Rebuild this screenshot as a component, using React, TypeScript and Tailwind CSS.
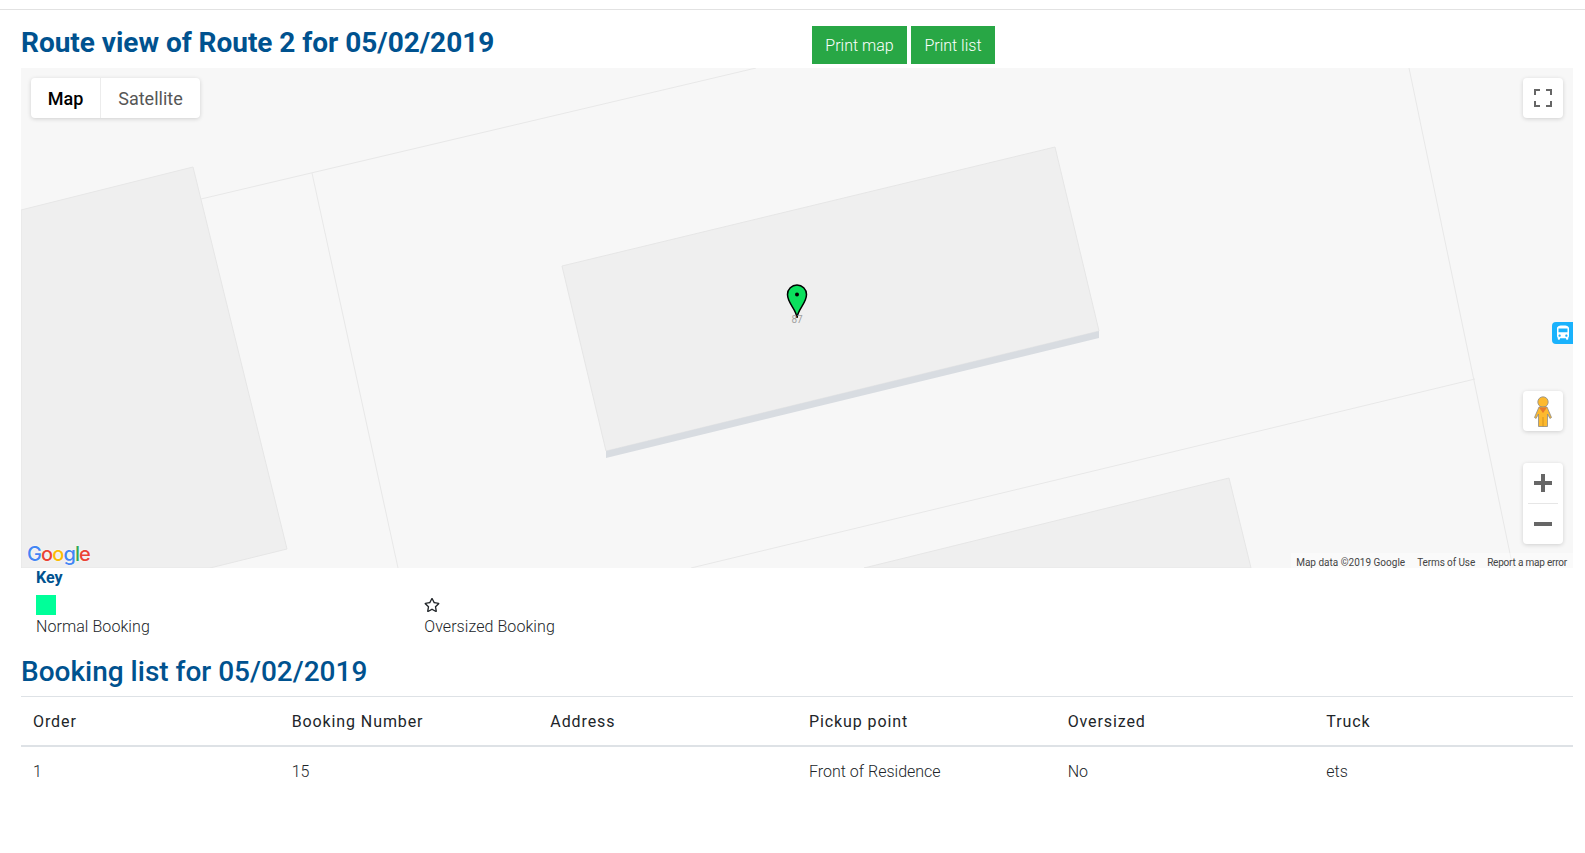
import { FaRegStar } from 'react-icons/fa';

const ROBOTO = 'font-[Roboto,sans-serif]';

function MapCanvas() {
  return (
    <svg className="absolute inset-0" width="1552" height="500" viewBox="0 0 1552 500" fill="none">
      <g stroke="#e8e8e8" strokeWidth="1">
        <path d="M180 131 L735 0" />
        <path d="M291 105 L377 500" />
        <path d="M1388 0 L1492 500" />
        <path d="M1454 311 L670 500" />
      </g>
      <g fill="#efefef" stroke="#e6e6e6" strokeWidth="1">
        <polygon points="0,142 172,99 266,481 189,500 0,500" />
        <polygon points="843,500 1208,410 1230,500" />
        <polygon points="541,198 1034,79 1078,263 585,383" />
      </g>
      <polygon points="585,383 1078,263 1078,270 585,390" fill="#d8dce1" />
    </svg>
  );
}

function Pin() {
  return (
    <div className="absolute left-[756px] top-[216px] w-[40px] h-[45px]">
      <svg width="40" height="36" viewBox="0 0 40 36" className="absolute top-0 left-0">
        <path
          d="M20 34 C19.4 25 10.5 19.5 10.5 10.5 A9.5 9.5 0 0 1 29.5 10.5 C29.5 19.5 20.6 25 20 34 Z"
          fill="#0be05d"
          stroke="#000"
          strokeWidth="1.5"
        />
        <circle cx="20" cy="10.5" r="2" fill="#000" />
      </svg>
      <div className="absolute top-[30px] left-0 w-full text-center text-[10px] leading-[12px] text-[#a0a0a0]">87</div>
    </div>
  );
}

export default function App() {
  return (
    <div className={`${ROBOTO} bg-white min-h-[853px] text-[#212529]`}>
      <div className="h-[10px] border-b border-[#e2e2e2]" />

      <div className="pl-[21px] pr-[12px]">
        <div className="grid grid-cols-2 h-[58px]">
          <h1 className="text-[28px] leading-[34px] font-bold tracking-[-0.03px] text-[#00528f] pt-[16px] whitespace-nowrap">
            Route view of Route 2 for 05/02/2019
          </h1>
          <div className="flex gap-[4px] pl-[15px] pt-[16px]">
            <button className="h-[38px] w-[95px] pt-[2px] bg-[#28a745] text-white font-light text-base">Print map</button>
            <button className="h-[38px] w-[84px] pt-[2px] bg-[#28a745] text-white font-light text-base">Print list</button>
          </div>
        </div>

        <div className="relative h-[500px] bg-[#f7f7f7] overflow-hidden">
          <MapCanvas />
          <Pin />

          <div className="absolute left-[10px] top-[10px] flex h-[40px] bg-white rounded-sm shadow-[0_1px_4px_rgba(0,0,0,0.16)] text-[18px]">
            <div className="w-[70px] flex items-center justify-center font-medium text-black border-r border-[#ececec]">Map</div>
            <div className="w-[99px] flex items-center justify-center text-[#565656]">Satellite</div>
          </div>

          <div className="absolute right-[10px] top-[10px] w-[40px] h-[40px] bg-white rounded-sm shadow-[0_1px_4px_rgba(0,0,0,0.16)] flex items-center justify-center">
            <svg width="18" height="18" viewBox="0 0 18 18" fill="#666666">
              <path d="M0 0h6v2H2v4H0zM12 0h6v6h-2V2h-4zM0 12h2v4h4v2H0zM16 12h2v6h-6v-2h4z" />
            </svg>
          </div>

          <div className="absolute right-0 top-[254px] w-[21px] h-[22px] bg-[#1ab2fc] rounded-l-[4px] flex items-center justify-center">
            <svg width="18" height="18" viewBox="0 0 24 24" fill="#ffffff">
              <path d="M4 16c0 .88.39 1.67 1 2.22V20c0 .55.45 1 1 1h1c.55 0 1-.45 1-1v-1h8v1c0 .55.45 1 1 1h1c.55 0 1-.45 1-1v-1.78c.61-.55 1-1.34 1-2.22V6c0-3.5-3.58-4-8-4s-8 .5-8 4v10zm3.5 1c-.83 0-1.5-.67-1.5-1.5S6.67 14 7.5 14s1.5.67 1.5 1.5S8.33 17 7.5 17zm9 0c-.83 0-1.5-.67-1.5-1.5s.67-1.5 1.5-1.5 1.5.67 1.5 1.5-.67 1.5-1.5 1.5zm1.5-6H6V6h12v5z" />
            </svg>
          </div>

          <div className="absolute right-[10px] top-[323px] w-[40px] h-[40px] bg-white rounded-sm shadow-[0_1px_4px_rgba(0,0,0,0.16)] flex items-center justify-center">
            <svg width="18" height="31" viewBox="0 0 18 31">
              <circle cx="9" cy="6" r="5.2" fill="#fdb92e" stroke="#8a8a8a" strokeWidth="0.8" />
              <path
                d="M5 11h8l4.5 10.5-1.6.9L13.5 18v12.5h-9V18l-2.4 4.4-1.6-.9z"
                fill="#fdb92e"
                stroke="#8a8a8a"
                strokeWidth="0.8"
              />
              <path d="M5 11.5h8L9 17z" fill="#e8792b" />
              <path d="M9 21v9.5" stroke="#c98a1c" strokeWidth="0.8" />
            </svg>
          </div>

          <div className="absolute right-[10px] top-[395px] w-[40px] h-[81px] bg-white rounded-sm shadow-[0_1px_4px_rgba(0,0,0,0.16)] flex flex-col items-center">
            <div className="h-[40px] flex items-center justify-center">
              <svg width="18" height="18" viewBox="0 0 18 18" fill="#666666">
                <path d="M7 0h4v7h7v4h-7v7H7v-7H0V7h7z" />
              </svg>
            </div>
            <div className="w-[30px] h-px bg-[#e6e6e6]" />
            <div className="h-[40px] flex items-center justify-center">
              <svg width="18" height="4" viewBox="0 0 18 4" fill="#666666">
                <rect width="18" height="4" />
              </svg>
            </div>
          </div>

          <div className="absolute left-[6px] bottom-[1px] text-[20px] leading-[26px] font-['Inter',sans-serif] font-medium tracking-[-0.9px] [text-shadow:0_0_2px_#fff]">
            <span className="text-[#4285f4]">G</span>
            <span className="text-[#ea4335]">o</span>
            <span className="text-[#fbbc05]">o</span>
            <span className="text-[#4285f4]">g</span>
            <span className="text-[#34a853]">l</span>
            <span className="text-[#ea4335]">e</span>
          </div>

          <div className="absolute right-0 bottom-0 h-[15px] flex items-center gap-[12px] pl-[5px] pr-[6px] pt-[3px] bg-white/40 text-[10px] text-[#444444]">
            <span>Map data ©2019 Google</span>
            <span className="tracking-[-0.1px]">Terms of Use</span>
            <span className="tracking-[-0.2px]">Report a map error</span>
          </div>
        </div>

        <div className="pl-[15px]">
          <div className="text-base leading-[19px] font-bold text-[#00528f]">Key</div>
          <div className="grid grid-cols-4 pt-[8px] font-light text-base tracking-[0.07px]">
            <div>
              <div className="w-[20px] h-[20px] bg-[#00ff99]" />
              <div className="leading-[24px] text-[#212529]">Normal Booking</div>
            </div>
            <div className="pl-[4px]">
              <div className="h-[20px] flex items-center">
                <FaRegStar className="w-[16px] h-[16px] text-[#212529]" />
              </div>
              <div className="leading-[24px] text-[#212529]">Oversized Booking</div>
            </div>
          </div>
        </div>

        <h2 className="text-[28px] leading-[34px] font-medium text-[#00528f] mt-[16px]">Booking list for 05/02/2019</h2>

        <div className="mt-[7px] border-t border-[#dee2e6]">
          <div className="grid grid-cols-6 h-[50px] items-center border-b-2 border-[#dee2e6] text-base font-normal tracking-[0.9px]">
            {['Order', 'Booking Number', 'Address', 'Pickup point', 'Oversized', 'Truck'].map(h => (
              <div key={h} className="px-[12px] pt-[1px]">{h}</div>
            ))}
          </div>
          <div className="grid grid-cols-6 h-[49px] items-center text-base font-light">
            {['1', '15', '', 'Front of Residence', 'No', 'ets'].map((c, i) => (
              <div key={i} className="px-[12px]">{c}</div>
            ))}
          </div>
        </div>
      </div>
    </div>
  );
}
